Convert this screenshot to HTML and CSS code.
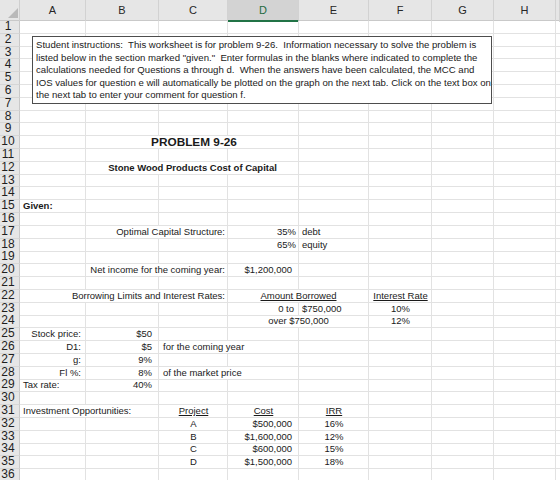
FILE: index.html
```html
<!DOCTYPE html>
<html>
<head>
<meta charset="utf-8">
<link rel="stylesheet" href="styles.css">
</head>
<body>
<div class="sheet">
  <div class="colhead">
    <div class="corner"><svg width="20" height="21" viewBox="0 0 20 21"><polygon points="18,8 18,18 8,18" fill="#b9b9b9"/></svg></div>
    <div class="ch">A</div><div class="ch">B</div><div class="ch">C</div><div class="ch sel">D</div><div class="ch">E</div><div class="ch">F</div><div class="ch">G</div><div class="ch">H</div><div class="ch"></div>
  </div>

  <div class="row"><div class="rh">1</div><div class="c"></div><div class="c"></div><div class="c"></div><div class="c"></div><div class="c"></div><div class="c"></div><div class="c"></div><div class="c"></div><div class="c"></div></div>
  <div class="row"><div class="rh">2</div><div class="c"></div><div class="c"></div><div class="c"></div><div class="c"></div><div class="c"></div><div class="c"></div><div class="c"></div><div class="c"></div><div class="c"></div></div>
  <div class="row"><div class="rh">3</div><div class="c"></div><div class="c"></div><div class="c"></div><div class="c"></div><div class="c"></div><div class="c"></div><div class="c"></div><div class="c"></div><div class="c"></div></div>
  <div class="row"><div class="rh">4</div><div class="c"></div><div class="c"></div><div class="c"></div><div class="c"></div><div class="c"></div><div class="c"></div><div class="c"></div><div class="c"></div><div class="c"></div></div>
  <div class="row"><div class="rh">5</div><div class="c"></div><div class="c"></div><div class="c"></div><div class="c"></div><div class="c"></div><div class="c"></div><div class="c"></div><div class="c"></div><div class="c"></div></div>
  <div class="row"><div class="rh">6</div><div class="c"></div><div class="c"></div><div class="c"></div><div class="c"></div><div class="c"></div><div class="c"></div><div class="c"></div><div class="c"></div><div class="c"></div></div>
  <div class="row"><div class="rh">7</div><div class="c"></div><div class="c"></div><div class="c"></div><div class="c"></div><div class="c"></div><div class="c"></div><div class="c"></div><div class="c"></div><div class="c"></div></div>
  <div class="row"><div class="rh">8</div><div class="c"></div><div class="c"></div><div class="c"></div><div class="c"></div><div class="c"></div><div class="c"></div><div class="c"></div><div class="c"></div><div class="c"></div></div>
  <div class="row"><div class="rh">9</div><div class="c"></div><div class="c"></div><div class="c"></div><div class="c"></div><div class="c"></div><div class="c"></div><div class="c"></div><div class="c"></div><div class="c"></div></div>
  <div class="row"><div class="rh">10</div><div class="c"></div><div class="c span3 center title">PROBLEM 9-26</div><div class="c"></div><div class="c"></div><div class="c"></div><div class="c"></div><div class="c"></div></div>
  <div class="row"><div class="rh">11</div><div class="c"></div><div class="c"></div><div class="c"></div><div class="c"></div><div class="c"></div><div class="c"></div><div class="c"></div><div class="c"></div><div class="c"></div></div>
  <div class="row"><div class="rh">12</div><div class="c"></div><div class="c span3 center bold">Stone Wood Products Cost of Capital</div><div class="c"></div><div class="c"></div><div class="c"></div><div class="c"></div><div class="c"></div></div>
  <div class="row"><div class="rh">13</div><div class="c"></div><div class="c"></div><div class="c"></div><div class="c"></div><div class="c"></div><div class="c"></div><div class="c"></div><div class="c"></div><div class="c"></div></div>
  <div class="row"><div class="rh">14</div><div class="c"></div><div class="c"></div><div class="c"></div><div class="c"></div><div class="c"></div><div class="c"></div><div class="c"></div><div class="c"></div><div class="c"></div></div>
  <div class="row"><div class="rh">15</div><div class="c bold">Given:</div><div class="c"></div><div class="c"></div><div class="c"></div><div class="c"></div><div class="c"></div><div class="c"></div><div class="c"></div><div class="c"></div></div>
  <div class="row"><div class="rh">16</div><div class="c"></div><div class="c"></div><div class="c"></div><div class="c"></div><div class="c"></div><div class="c"></div><div class="c"></div><div class="c"></div><div class="c"></div></div>
  <div class="row"><div class="rh">17</div><div class="c"></div><div class="c span2 right">Optimal Capital Structure:</div><div class="c right">35%</div><div class="c">debt</div><div class="c"></div><div class="c"></div><div class="c"></div><div class="c"></div></div>
  <div class="row"><div class="rh">18</div><div class="c"></div><div class="c"></div><div class="c"></div><div class="c right">65%</div><div class="c">equity</div><div class="c"></div><div class="c"></div><div class="c"></div><div class="c"></div></div>
  <div class="row"><div class="rh">19</div><div class="c"></div><div class="c"></div><div class="c"></div><div class="c"></div><div class="c"></div><div class="c"></div><div class="c"></div><div class="c"></div><div class="c"></div></div>
  <div class="row"><div class="rh">20</div><div class="c"></div><div class="c span2 right">Net income for the coming year:</div><div class="c right money">$1,200,000</div><div class="c"></div><div class="c"></div><div class="c"></div><div class="c"></div><div class="c"></div></div>
  <div class="row"><div class="rh">21</div><div class="c"></div><div class="c"></div><div class="c"></div><div class="c"></div><div class="c"></div><div class="c"></div><div class="c"></div><div class="c"></div><div class="c"></div></div>
  <div class="row"><div class="rh">22</div><div class="c span3 right">Borrowing Limits and Interest Rates:</div><div class="c span2 center"><u>Amount Borrowed</u></div><div class="c center"><u>Interest Rate</u></div><div class="c"></div><div class="c"></div><div class="c"></div></div>
  <div class="row"><div class="rh">23</div><div class="c"></div><div class="c"></div><div class="c"></div><div class="c right lbl">0 to</div><div class="c">$750,000</div><div class="c center">10%</div><div class="c"></div><div class="c"></div><div class="c"></div></div>
  <div class="row"><div class="rh">24</div><div class="c"></div><div class="c"></div><div class="c"></div><div class="c span2 center">over $750,000</div><div class="c center">12%</div><div class="c"></div><div class="c"></div><div class="c"></div></div>
  <div class="row"><div class="rh">25</div><div class="c right lbl">Stock price:</div><div class="c right money">$50</div><div class="c"></div><div class="c"></div><div class="c"></div><div class="c"></div><div class="c"></div><div class="c"></div><div class="c"></div></div>
  <div class="row"><div class="rh">26</div><div class="c right lbl">D1:</div><div class="c right money">$5</div><div class="c span2 note">for the coming year</div><div class="c"></div><div class="c"></div><div class="c"></div><div class="c"></div><div class="c"></div></div>
  <div class="row"><div class="rh">27</div><div class="c right lbl">g:</div><div class="c right money">9%</div><div class="c"></div><div class="c"></div><div class="c"></div><div class="c"></div><div class="c"></div><div class="c"></div><div class="c"></div></div>
  <div class="row"><div class="rh">28</div><div class="c right lbl">Fl %:</div><div class="c right money">8%</div><div class="c span2 note">of the market price</div><div class="c"></div><div class="c"></div><div class="c"></div><div class="c"></div><div class="c"></div></div>
  <div class="row"><div class="rh">29</div><div class="c">Tax rate:</div><div class="c right money">40%</div><div class="c"></div><div class="c"></div><div class="c"></div><div class="c"></div><div class="c"></div><div class="c"></div><div class="c"></div></div>
  <div class="row"><div class="rh">30</div><div class="c"></div><div class="c"></div><div class="c"></div><div class="c"></div><div class="c"></div><div class="c"></div><div class="c"></div><div class="c"></div><div class="c"></div></div>
  <div class="row"><div class="rh">31</div><div class="c span2">Investment Opportunities:</div><div class="c center"><u>Project</u></div><div class="c center"><u>Cost</u></div><div class="c center"><u>IRR</u></div><div class="c"></div><div class="c"></div><div class="c"></div><div class="c"></div></div>
  <div class="row"><div class="rh">32</div><div class="c"></div><div class="c"></div><div class="c center">A</div><div class="c right money">$500,000</div><div class="c center">16%</div><div class="c"></div><div class="c"></div><div class="c"></div><div class="c"></div></div>
  <div class="row"><div class="rh">33</div><div class="c"></div><div class="c"></div><div class="c center">B</div><div class="c right money">$1,600,000</div><div class="c center">12%</div><div class="c"></div><div class="c"></div><div class="c"></div><div class="c"></div></div>
  <div class="row"><div class="rh">34</div><div class="c"></div><div class="c"></div><div class="c center">C</div><div class="c right money">$600,000</div><div class="c center">15%</div><div class="c"></div><div class="c"></div><div class="c"></div><div class="c"></div></div>
  <div class="row"><div class="rh">35</div><div class="c"></div><div class="c"></div><div class="c center">D</div><div class="c right money">$1,500,000</div><div class="c center">18%</div><div class="c"></div><div class="c"></div><div class="c"></div><div class="c"></div></div>
  <div class="row"><div class="rh">36</div><div class="c"></div><div class="c"></div><div class="c"></div><div class="c"></div><div class="c"></div><div class="c"></div><div class="c"></div><div class="c"></div><div class="c"></div></div>

  <div class="textbox">Student instructions:&nbsp; This worksheet is for problem 9-26.&nbsp; Information necessary to solve the problem is<br>listed below in the section marked "given."&nbsp; Enter formulas in the blanks where indicated to complete the<br>calculations needed for Questions a through d.&nbsp; When the answers have been calculated, the MCC and<br>IOS values for question e will automatically be plotted on the graph on the next tab. Click on the text box on<br>the next tab to enter your comment for question f.</div>
</div>
</body>
</html>
```

FILE: styles.css
```css
html, body {
  margin: 0;
  padding: 0;
  background: #ffffff;
  overflow: hidden;
}

.sheet {
  position: relative;
  width: 560px;
  height: 480px;
  overflow: hidden;
  font-family: "Liberation Sans", Arial, sans-serif;
  color: #1a1a1a;
}

.colhead,
.row {
  display: grid;
  grid-template-columns: 20px 66px 73px 69px 71px 70px 63px 62px 62px 1fr;
}

.colhead {
  height: 21px;
  background: #e6e6e6;
  border-bottom: 1px solid #c9c9c9;
  box-sizing: border-box;
}

.corner {
  border-right: 1px solid #cfcfcf;
  box-sizing: border-box;
}

.corner svg {
  display: block;
}

.ch {
  box-sizing: border-box;
  border-right: 1px solid #d2d2d2;
  font-size: 11px;
  line-height: 21px;
  text-align: center;
  color: #262626;
}

.ch.sel {
  background: #d3d3d3;
  border-bottom: 2px solid #217346;
  color: #1f6b41;
  line-height: 20px;
}

.row {
  height: 12.8px;
}

.rh {
  box-sizing: border-box;
  background: #e6e6e6;
  border-right: 1px solid #c9c9c9;
  border-bottom: 1px solid #d6d6d6;
  font-size: 12px;
  line-height: 11.8px;
  text-align: center;
  padding-right: 3px;
  color: #1e1e1e;
}

.c {
  box-sizing: border-box;
  border-right: 1px solid #e2e2e2;
  border-bottom: 1px solid #e2e2e2;
  font-size: 9.5px;
  line-height: 12px;
  white-space: nowrap;
  padding: 0 2px 0 3px;
}

.span2 { grid-column: span 2; }
.span3 { grid-column: span 3; }

.right { text-align: right; }
.center { text-align: center; }
.bold { font-weight: bold; }
.title { font-weight: bold; font-size: 11.8px; padding-left: 6px; }
.money { padding-right: 6px; }
.lbl { padding-right: 4px; }
.note { padding-left: 4px; }

.textbox {
  position: absolute;
  left: 32px;
  top: 36px;
  width: 460px;
  height: 68px;
  box-sizing: border-box;
  border: 1px solid #4d4d4d;
  background: #ffffff;
  padding: 2px 3px;
  font-size: 9.6px;
  line-height: 12.5px;
  white-space: nowrap;
  color: #1a1a1a;
}
```
